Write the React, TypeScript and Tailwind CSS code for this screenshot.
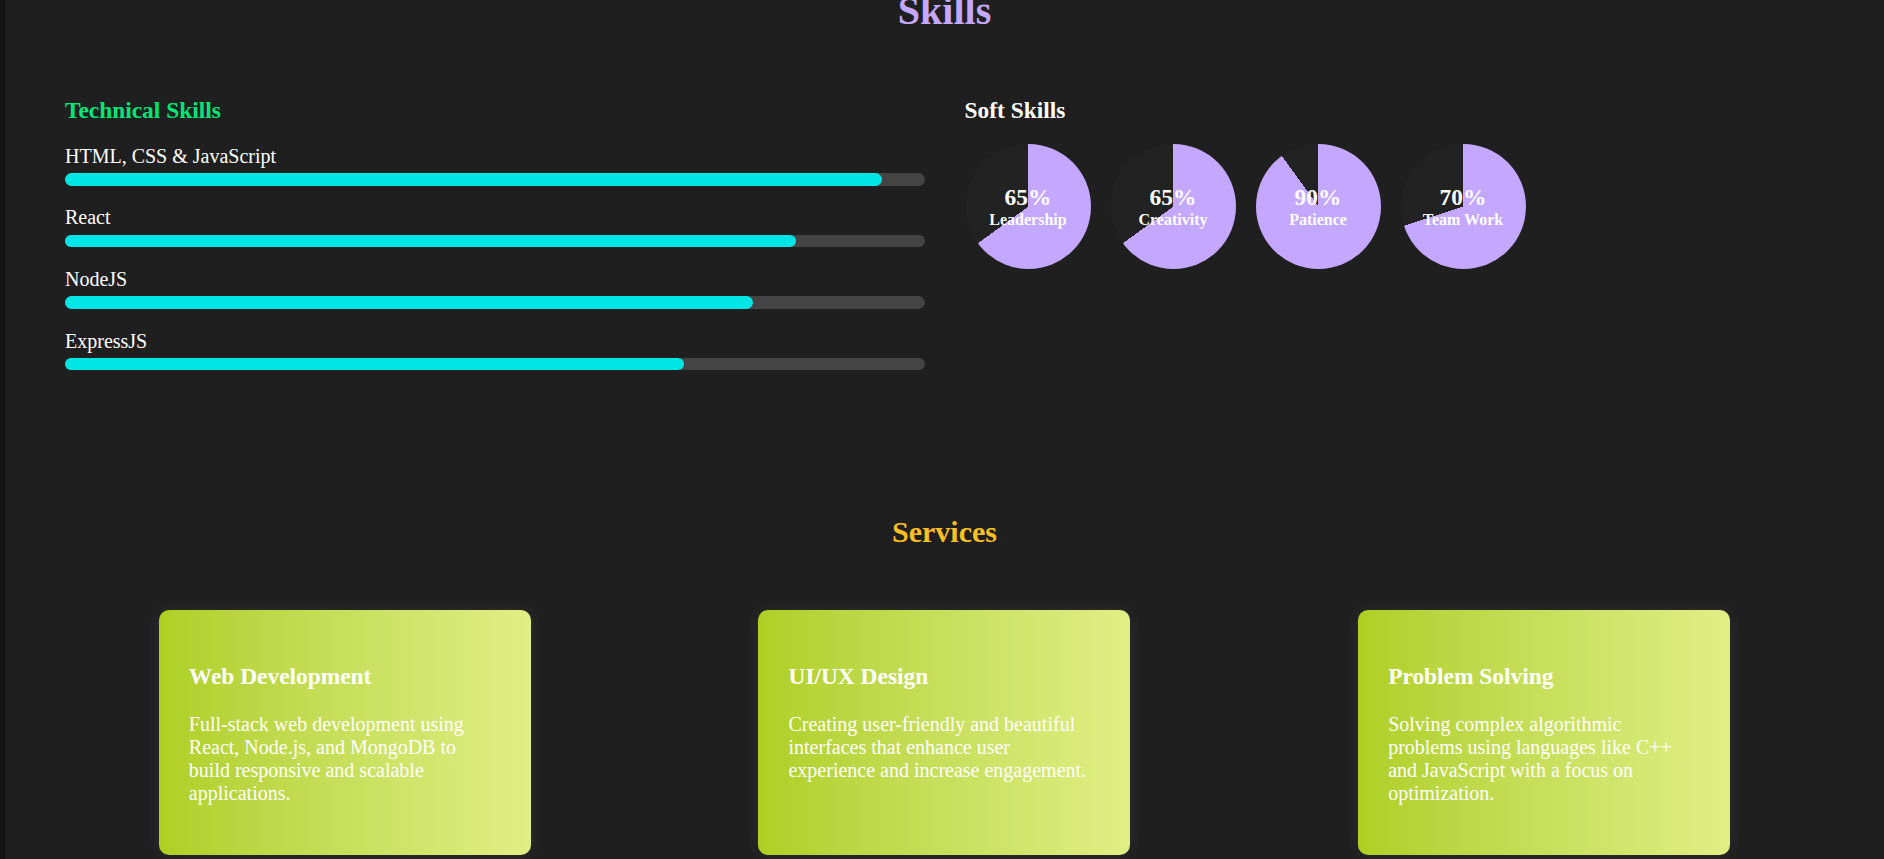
import React from "react";

const technical = [
  { name: "HTML, CSS & JavaScript", level: 95 },
  { name: "React", level: 85 },
  { name: "NodeJS", level: 80 },
  { name: "ExpressJS", level: 72 },
];

const soft = [
  { name: "Leadership", level: 65 },
  { name: "Creativity", level: 65 },
  { name: "Patience", level: 90 },
  { name: "Team Work", level: 70 },
];

const services = [
  {
    title: "Web Development",
    text: "Full-stack web development using React, Node.js, and MongoDB to build responsive and scalable applications.",
  },
  {
    title: "UI/UX Design",
    text: "Creating user-friendly and beautiful interfaces that enhance user experience and increase engagement.",
  },
  {
    title: "Problem Solving",
    text: "Solving complex algorithmic problems using languages like C++ and JavaScript with a focus on optimization.",
  },
];

const App = () => {
  return (
    <div className="flex min-h-screen bg-[#1f1f1f] text-white font-['Liberation_Serif','Times_New_Roman',serif]">
      {/* left edge strip */}
      <div className="w-[5px] shrink-0 bg-[#141414]" />

      <main className="flex flex-1 flex-col pb-10">
        {/* skills */}
        <h1 className="-mt-[12.5px] text-center text-[40px] leading-[46px] font-bold text-[#c4a7ff]">
          Skills
        </h1>

        <div className="mt-[63.4px] grid grid-cols-2 gap-10 px-[60px]">
          <div>
            <h3 className="mb-5 text-[23.4px] leading-[27px] font-bold text-[#00e676]">
              Technical Skills
            </h3>
            <div className="flex flex-col gap-[19.8px]">
              {technical.map((s) => (
                <div key={s.name}>
                  <p className="mb-[5.4px] text-[20px] leading-[24px]">{s.name}</p>
                  <div className="h-[12.4px] w-full rounded-full bg-[#444444]">
                    <div
                      className="h-full rounded-full bg-[#00e6e6]"
                      style={{ width: `${s.level}%` }}
                    />
                  </div>
                </div>
              ))}
            </div>
          </div>

          <div>
            <h3 className="mb-5 text-[23.4px] leading-[27px] font-bold text-white">
              Soft Skills
            </h3>
            <div className="flex gap-5 pl-px">
              {soft.map((s) => (
                <div
                  key={s.name}
                  className="flex h-[125px] w-[125px] flex-col items-center justify-center rounded-full font-bold"
                  style={{
                    background: `conic-gradient(#c4a7ff 0% ${s.level}%, #222222 ${s.level}% 100%)`,
                  }}
                >
                  <span className="text-[23.4px] leading-[27px]">{s.level}%</span>
                  <span className="text-[16px] leading-[18.4px]">{s.name}</span>
                </div>
              ))}
            </div>
          </div>
        </div>

        {/* services */}
        <h2 className="mt-[143.8px] text-center text-[30px] leading-[35px] font-bold text-[#fbbf24]">
          Services
        </h2>

        <div className="mt-[60.5px] grid grid-cols-3 justify-items-center px-10">
          {services.map((s) => (
            <div
              key={s.title}
              className="w-[372px] rounded-[10px] bg-linear-to-r from-[#b0cf22] to-[#e0ef84] p-[30px] shadow-[0_0_18px_rgba(255,255,255,0.07)]"
            >
              <h3 className="mt-[23.4px] mb-[23.4px] text-[23.4px] leading-[27px] font-bold">
                {s.title}
              </h3>
              <p className="mb-5 text-[20px] leading-[23px]">{s.text}</p>
            </div>
          ))}
        </div>
      </main>
    </div>
  );
};

export default App;
